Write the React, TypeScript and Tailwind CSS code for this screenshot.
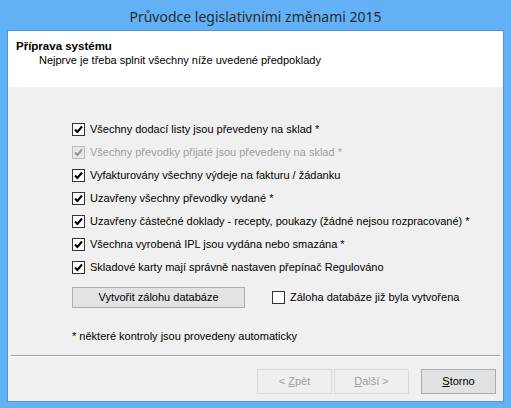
import React from "react";

const F = { fontFamily: '"Liberation Sans", Arial, sans-serif' };

function Check({ checked = true, disabled = false }: { checked?: boolean; disabled?: boolean }) {
  return (
    <div
      className={
        "w-[13px] h-[13px] border flex items-center justify-center shrink-0 " +
        (disabled ? "border-[#bcbcbc] bg-[#e6e6e6]" : "border-[#333333] bg-white")
      }
    >
      {checked && (
        <svg width="9" height="9" viewBox="0 0 9 9">
          <path
            d="M1 4.5 L3.4 7 L8 1.5"
            fill="none"
            stroke={disabled ? "#9a9a9a" : "#000"}
            strokeWidth="2"
          />
        </svg>
      )}
    </div>
  );
}

function Row({ text, disabled = false }: { text: string; disabled?: boolean }) {
  return (
    <div className="h-[23px] flex items-center gap-[5px]">
      <Check disabled={disabled} />
      <span className={disabled ? "text-[#a0a0a0]" : "text-black"}>{text}</span>
    </div>
  );
}

function NavBtn({ children, disabled = false }: { children: React.ReactNode; disabled?: boolean }) {
  return (
    <div
      className={
        "w-[75px] h-[25px] border flex items-center justify-center " +
        (disabled
          ? "border-[#d9d9d9] bg-[#efefef] text-[#a0a0a0]"
          : "border-[#adadad] bg-[#e1e1e1] text-black")
      }
    >
      {children}
    </div>
  );
}

export default function App() {
  return (
    <div className="w-[511px] h-[408px] bg-[#62b1f6] flex flex-col overflow-hidden" style={F}>
      <div
        className="h-[30px] flex items-center justify-center text-[14px] text-[#2b2b2b] pt-[2px]"
        style={{ fontFamily: '"Noto Sans", "Open Sans", sans-serif' }}
      >
        Průvodce legislativními změnami 2015
      </div>
      <div className="flex-1 mx-[7px] mb-[6px] border border-[#4a97e2] flex flex-col text-[11px]">
        <div className="h-[56px] bg-white flex flex-col pl-[8px] pt-[8px] leading-[14px]">
          <div className="font-bold text-black text-[11.5px]">Příprava systému</div>
          <div className="pl-[23px] text-black">Nejprve je třeba splnit všechny níže uvedené předpoklady</div>
        </div>
        <div className="flex-1 bg-[#f0f0f0] flex flex-col">
          <div className="pl-[64px] pt-[31px] flex flex-col">
            <Row text="Všechny dodací listy jsou převedeny na sklad *" />
            <Row text="Všechny převodky přijaté jsou převedeny na sklad *" disabled />
            <Row text="Vyfakturovány všechny výdeje na fakturu / žádanku" />
            <Row text="Uzavřeny všechny převodky vydané *" />
            <Row text="Uzavřeny částečné doklady - recepty, poukazy (žádné nejsou rozpracované) *" />
            <Row text="Všechna vyrobená IPL jsou vydána nebo smazána *" />
            <Row text="Skladové karty mají správně nastaven přepínač Regulováno" />
            <div className="flex items-center mt-[8px]">
              <div className="w-[173px] h-[21px] border border-[#adadad] bg-[#e3e3e3] flex items-center justify-center text-black">
                Vytvořit zálohu databáze
              </div>
              <div className="flex items-center gap-[5px] ml-[27px]">
                <Check checked={false} />
                <span>Záloha databáze již byla vytvořena</span>
              </div>
            </div>
            <div className="mt-[21px] leading-[14px]">* některé kontroly jsou provedeny automaticky</div>
          </div>
          <div className="mx-[3px] mt-[12px] border-t border-[#a0a0a0] border-b border-b-white" />
          <div className="flex justify-end pr-[7px] pt-[12px] gap-[2px]">
            <NavBtn disabled>
              &lt; <span className="underline ml-[3px]">Z</span>pět
            </NavBtn>
            <NavBtn disabled>
              <span className="underline">D</span>alší &gt;
            </NavBtn>
            <div className="w-[8px]" />
            <NavBtn>
              <span className="underline">S</span>torno
            </NavBtn>
          </div>
        </div>
      </div>
    </div>
  );
}
